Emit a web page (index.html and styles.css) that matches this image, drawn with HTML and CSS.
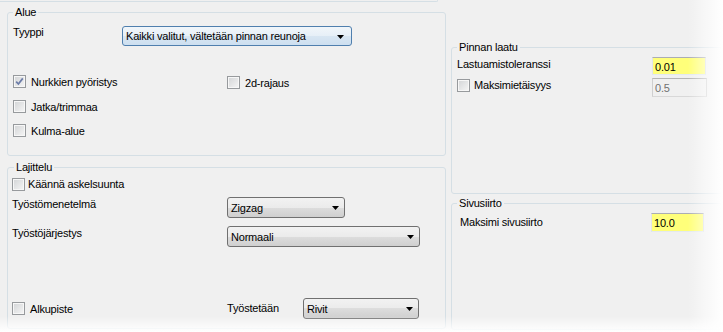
FILE: index.html
```html
<!DOCTYPE html>
<html lang="fi">
<head>
  <meta charset="UTF-8">
  <title>Työstöasetukset</title>
  <link rel="stylesheet" href="styles.css">
</head>
<body>

<div class="panel">
  <div class="col-left">
    <div class="top-edge"></div>

    <fieldset class="group group-alue">
      <legend>Alue</legend>
      <div class="field-row row-type">
        <span class="label label-type">Tyyppi</span>
        <div class="combo combo-hot combo-type">
          <span>Kaikki valitut, vältetään pinnan reunoja</span>
          <svg class="arrow" width="7" height="4" viewBox="0 0 7 4"><polygon points="0,0 7,0 3.5,4" fill="#000"/></svg>
        </div>
      </div>
      <div class="check-grid">
        <label class="check">
          <span class="box">
            <svg width="11" height="11" viewBox="0 0 11 11"><path d="M2.2 5.6 L4.4 8 L8.8 2.4" fill="none" stroke="#6c7ca8" stroke-width="1.7"/></svg>
          </span>
          <span>Nurkkien pyöristys</span>
        </label>
        <label class="check check-2d"><span class="box"></span><span>2d-rajaus</span></label>
        <label class="check col-first"><span class="box"></span><span>Jatka/trimmaa</span></label>
        <label class="check col-first"><span class="box"></span><span>Kulma-alue</span></label>
      </div>
    </fieldset>

    <fieldset class="group group-sort">
      <legend>Lajittelu</legend>
      <label class="check check-tight check-flip"><span class="box"></span><span>Käännä askelsuunta</span></label>
      <div class="field-row row-method">
        <span class="label label-wide">Työstömenetelmä</span>
        <div class="combo combo-zigzag">
          <span>Zigzag</span>
          <svg class="arrow" width="7" height="4" viewBox="0 0 7 4"><polygon points="0,0 7,0 3.5,4" fill="#000"/></svg>
        </div>
      </div>
      <div class="field-row row-order">
        <span class="label label-wide">Työstöjärjestys</span>
        <div class="combo combo-order">
          <span>Normaali</span>
          <svg class="arrow" width="7" height="4" viewBox="0 0 7 4"><polygon points="0,0 7,0 3.5,4" fill="#000"/></svg>
        </div>
      </div>
      <div class="field-row row-start">
        <label class="check check-start"><span class="box"></span><span>Alkupiste</span></label>
        <span class="label label-mid">Työstetään</span>
        <div class="combo combo-rows">
          <span>Rivit</span>
          <svg class="arrow" width="7" height="4" viewBox="0 0 7 4"><polygon points="0,0 7,0 3.5,4" fill="#000"/></svg>
        </div>
      </div>
    </fieldset>
  </div>

  <div class="col-right">
    <fieldset class="group group-quality">
      <legend>Pinnan laatu</legend>
      <div class="field-row row-tol">
        <span class="label label-right">Lastuamistoleranssi</span>
        <div class="textbox">0.01</div>
      </div>
      <div class="field-row row-dist">
        <label class="check check-tight check-right"><span class="box"></span><span>Maksimietäisyys</span></label>
        <div class="textbox textbox-off">0.5</div>
      </div>
    </fieldset>

    <fieldset class="group group-side">
      <legend>Sivusiirto</legend>
      <div class="field-row row-side">
        <span class="label label-side">Maksimi sivusiirto</span>
        <div class="textbox textbox-side">10.0</div>
      </div>
    </fieldset>
  </div>
</div>

</body>
</html>
```

FILE: styles.css
```css
body {
  margin: 0;
  width: 723px;
  height: 332px;
  overflow: hidden;
  position: relative;
  background: #f0f0f0;
  color: #000;
  font-family: "Liberation Sans", Arial, sans-serif;
  font-size: 11px;
  letter-spacing: -0.2px;
}

/* white fade on the right and bottom edge of the shot */
body::after {
  content: "";
  position: absolute;
  inset: 0;
  pointer-events: none;
  background:
    linear-gradient(to right, rgba(255, 255, 255, 0) 688px, #fff 723px),
    linear-gradient(to bottom, rgba(255, 255, 255, 0) 316px, #fff 332px);
}

.panel {
  display: flex;
  align-items: flex-start;
  padding-left: 7px;
}

.col-left {
  width: 439px;
  flex-shrink: 0;
}

.col-right {
  width: 272px;
  flex-shrink: 0;
  margin-left: 5px;
}

.top-edge {
  width: 437px;
  margin-left: -7px;
  height: 1px;
  border-right: 1px solid #d5dfe5;
  border-bottom: 1px solid #d5dfe5;
  border-radius: 0 0 3px 0;
}

/* group boxes */
.group {
  margin: 0;
  padding: 0 5px;
  border: 1px solid #d5dfe5;
  border-radius: 3px;
  min-width: 0;
}

.group legend {
  padding: 0 2px;
  line-height: 13px;
}

.group-alue {
  margin-top: 4px;
  padding-bottom: 18px;
}

.group-sort {
  margin-top: 5px;
  padding-left: 4px;
  padding-bottom: 9px;
}

.group-sort legend {
  margin-left: 2px;
}

.group-quality {
  margin-top: 41px;
  padding-bottom: 96px;
}

.group-side {
  margin-top: 3px;
  padding-bottom: 97px;
}

/* rows */
.field-row {
  display: flex;
  align-items: flex-start;
}

.label {
  line-height: 13px;
  white-space: nowrap;
  flex-shrink: 0;
}

.label-type { width: 109px; }
.label-wide { width: 215px; padding-top: 1px; }
.label-mid { width: 76px; }
.label-right { width: 195px; padding-top: 1px; }
.label-side { width: 191px; margin-left: 3px; }

.row-type { margin-top: 7px; }
.row-method { margin-top: 6px; }
.row-order { margin-top: 8px; }
.row-start { margin-top: 51px; align-items: center; }
.row-tol { margin-top: 3px; }
.row-dist { margin-top: 3px; }
.row-side { margin-top: 3px; align-items: center; }

/* checkboxes */
.check-grid {
  display: grid;
  grid-template-columns: 214px auto;
  row-gap: 11px;
  margin-top: 29px;
}

.col-first { grid-column: 1; }

.check {
  display: flex;
  align-items: flex-start;
  gap: 5px;
  height: 13px;
  line-height: 15px;
  white-space: nowrap;
}

.check-2d { margin-top: 1px; }
.check-tight { line-height: 12px; gap: 4px; }
.check-flip { margin-top: 4px; gap: 3px; }
.check-start { width: 215px; flex-shrink: 0; }
.check-right { width: 195px; flex-shrink: 0; margin-top: 1px; }

.box {
  width: 13px;
  height: 13px;
  box-sizing: border-box;
  flex-shrink: 0;
  border: 1px solid #979a9d;
  background: linear-gradient(135deg, #d2d4d6, #f6f6f6);
  box-shadow: inset 0 0 0 1px #f7f7f7;
}

.box svg {
  display: block;
}

/* combo boxes */
.combo {
  display: flex;
  align-items: center;
  justify-content: space-between;
  box-sizing: border-box;
  height: 21px;
  padding: 1px 5px 0 3px;
  border: 1px solid #707070;
  border-radius: 3px;
  background: linear-gradient(#f2f2f2, #ebebeb 50%, #dddddd 50%, #cfcfcf);
  line-height: 13px;
  white-space: nowrap;
}

.combo-hot {
  border-color: #4f7fae;
  background: linear-gradient(#f1f6fa, #e6eff7 50%, #d8e6f2 50%, #cddff0);
  padding-right: 7px;
}

.combo-type { width: 230px; height: 20px; }
.combo-zigzag { width: 118px; }
.combo-order { width: 193px; }
.combo-rows { width: 116px; }

.arrow {
  display: block;
  flex-shrink: 0;
}

/* text boxes */
.textbox {
  box-sizing: border-box;
  width: 54px;
  height: 18px;
  padding: 2px 2px 0;
  border: 1px solid;
  border-color: #abadb3 #dbdfe6 #e3e9ef #e2e3ea;
  background: #ffff7a;
  line-height: 14px;
}

.textbox-off {
  height: 19px;
  width: 55px;
  background: #f0f0f0;
  border-color: #b5b5b5 #cfcfcf #d8d8d8 #cfcfcf;
  color: #707070;
}

.textbox-side {
  height: 19px;
  width: 53px;
}
```
